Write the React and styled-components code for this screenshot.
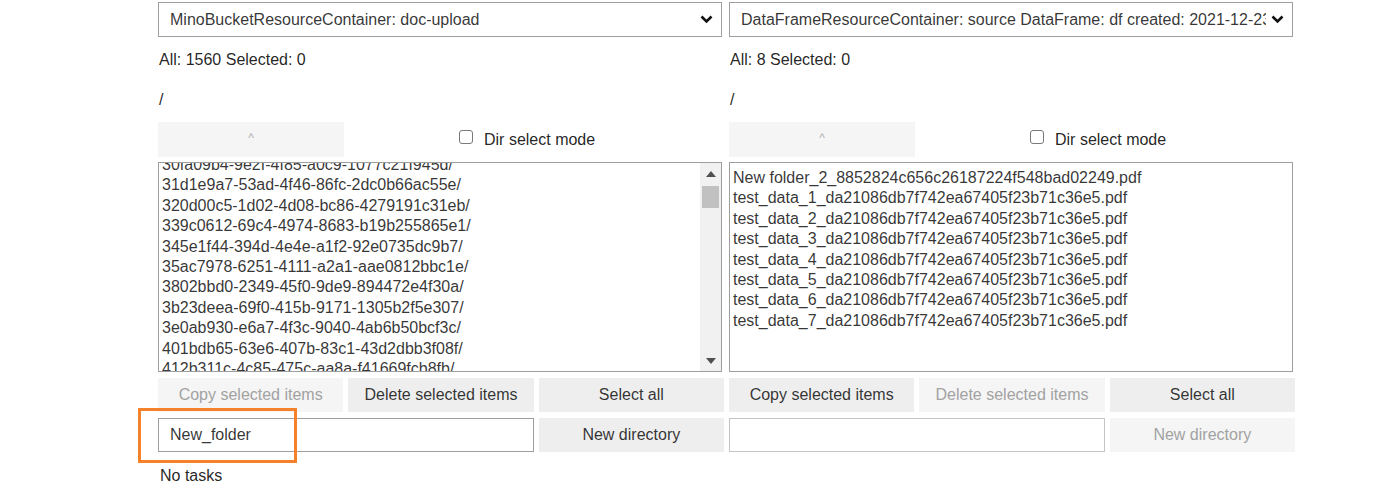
import React from "react";
import styled, { createGlobalStyle } from "styled-components";

const GlobalStyle = createGlobalStyle`
  html, body {
    margin: 0;
    padding: 0;
    background: #fff;
    font-family: "Liberation Sans", Arial, Helvetica, sans-serif;
    font-size: 16px;
    color: rgba(0, 0, 0, 0.87);
  }
`;

const Page = styled.div`
  padding-left: 158px;
  width: 1137px;
`;

const Columns = styled.div`
  display: grid;
  grid-template-columns: 566px 566px;
  column-gap: 5px;
`;

const Column = styled.div`
  display: flex;
  flex-direction: column;
`;

const Dropdown = styled.div`
  margin-top: 2px;
  width: 564px;
  height: 35px;
  box-sizing: border-box;
  border: 1px solid #9e9e9e;
  display: flex;
  align-items: center;
  padding: 0 8px 0 11px;
  gap: 5px;
  color: rgba(0, 0, 0, 0.8);
`;

const DropdownText = styled.span`
  flex: 1;
  overflow: hidden;
  white-space: nowrap;
`;

const Label = styled.div`
  height: 20px;
  line-height: 20px;
  margin-top: ${(p) => p.$top}px;
  padding-left: 1px;
`;

const ToolRow = styled.div`
  margin-top: 12px;
  height: 35px;
  display: flex;
  align-items: center;
`;

const Button = styled.button`
  height: ${(p) => p.$h || 34}px;
  width: 100%;
  border: none;
  margin: 0;
  padding: 0 6px;
  font-family: inherit;
  font-size: 16px;
  background: ${(p) => (p.disabled ? "#f5f5f5" : "#eeeeee")};
  color: ${(p) => (p.disabled ? "#a2a2a2" : "rgba(0,0,0,0.8)")};
  white-space: nowrap;
  overflow: hidden;
`;

const UpButton = styled(Button)`
  width: 186px;
  flex: none;
  font-size: 12px;
  color: #b0b0b0;
  padding-bottom: 4px;
`;

const CheckArea = styled.label`
  display: flex;
  align-items: center;
  margin-left: 115px;
  gap: 11px;
`;

const CheckBox = styled.span`
  width: 14px;
  height: 14px;
  box-sizing: border-box;
  border: 1.5px solid #7a7a7a;
  border-radius: 3px;
  background: #fff;
  margin-bottom: 5px;
`;

const ListBox = styled.div`
  margin-top: 5px;
  width: 564px;
  height: 210px;
  box-sizing: border-box;
  border: 1px solid #9e9e9e;
  display: flex;
  overflow: hidden;
`;

const ListRows = styled.div`
  flex: 1;
  overflow: hidden;
  padding: 5px 3px 0;
`;

const ListInner = styled.div`
  margin-top: ${(p) => p.$offset || 0}px;
`;

const ListItem = styled.div`
  height: 20.4px;
  line-height: 20.4px;
  white-space: nowrap;
  color: rgba(0, 0, 0, 0.8);
`;

const ScrollBar = styled.div`
  width: 21px;
  flex: none;
  background: #f1f1f1;
  display: flex;
  flex-direction: column;
  align-items: center;
`;

const ArrowCell = styled.div`
  height: 21px;
  width: 21px;
  display: flex;
  align-items: center;
  justify-content: center;
`;

const Track = styled.div`
  flex: 1;
  width: 100%;
  padding: 2px 2px 0;
  box-sizing: border-box;
`;

const Thumb = styled.div`
  height: 22px;
  background: #c1c1c1;
`;

const ButtonRow = styled.div`
  margin-top: 6px;
  display: grid;
  grid-template-columns: repeat(3, minmax(0, 1fr));
  column-gap: 5px;
`;

const InputCell = styled.div`
  position: relative;
  grid-column: span 2;
`;

const TextInput = styled.input`
  width: 100%;
  height: 34px;
  box-sizing: border-box;
  border: 1px solid ${(p) => (p.$light ? "#c4c4c4" : "#9e9e9e")};
  padding: 0 11px;
  font-family: inherit;
  font-size: 16px;
  color: rgba(0, 0, 0, 0.8);
  outline: none;
`;

const Highlight = styled.div`
  position: absolute;
  left: -20px;
  top: -10px;
  width: 159px;
  height: 55px;
  box-sizing: border-box;
  border: 3px solid #f5822a;
  pointer-events: none;
`;

const Status = styled.div`
  margin-top: 14px;
  height: 20px;
  line-height: 20px;
  padding-left: 2px;
`;

const Chevron = () => (
  <svg width="13" height="9" viewBox="0 0 13 9">
    <polyline points="1.5,1.5 6.5,6.5 11.5,1.5" fill="none" stroke="#111" strokeWidth="2.6" />
  </svg>
);

const Tri = ({ down }) => (
  <svg width="10" height="6" viewBox="0 0 10 6">
    <polygon points={down ? "0,0 10,0 5,6" : "0,6 10,6 5,0"} fill="#505050" />
  </svg>
);

const bucketItems = [
  "30fa09b4-9e2f-4f85-a0c9-1077c21f945d/",
  "31d1e9a7-53ad-4f46-86fc-2dc0b66ac55e/",
  "320d00c5-1d02-4d08-bc86-4279191c31eb/",
  "339c0612-69c4-4974-8683-b19b255865e1/",
  "345e1f44-394d-4e4e-a1f2-92e0735dc9b7/",
  "35ac7978-6251-4111-a2a1-aae0812bbc1e/",
  "3802bbd0-2349-45f0-9de9-894472e4f30a/",
  "3b23deea-69f0-415b-9171-1305b2f5e307/",
  "3e0ab930-e6a7-4f3c-9040-4ab6b50bcf3c/",
  "401bdb65-63e6-407b-83c1-43d2dbb3f08f/",
  "412b311c-4c85-475c-aa8a-f41669fcb8fb/",
];

const frameItems = [
  "New folder_2_8852824c656c26187224f548bad02249.pdf",
  ...[1, 2, 3, 4, 5, 6, 7].map((n) => `test_data_${n}_da21086db7f742ea67405f23b71c36e5.pdf`),
];

const Panel = ({ title, count, items, scroll, copyOff, deleteOff, dirOff, inputValue, highlight }) => (
  <Column>
    <Dropdown>
      <DropdownText>{title}</DropdownText>
      <Chevron />
    </Dropdown>
    <Label $top={13}>All: {count} Selected: 0</Label>
    <Label $top={20}>/</Label>
    <ToolRow>
      <UpButton disabled $h={35}>^</UpButton>
      <CheckArea>
        <CheckBox />
        <span>Dir select mode</span>
      </CheckArea>
    </ToolRow>
    <ListBox>
      <ListRows>
        <ListInner $offset={scroll ? -13 : 0}>
          {items.map((it) => (
            <ListItem key={it}>{it}</ListItem>
          ))}
        </ListInner>
      </ListRows>
      {scroll && (
        <ScrollBar>
          <ArrowCell>
            <Tri />
          </ArrowCell>
          <Track>
            <Thumb />
          </Track>
          <ArrowCell>
            <Tri down />
          </ArrowCell>
        </ScrollBar>
      )}
    </ListBox>
    <ButtonRow>
      <Button disabled={copyOff}>Copy selected items</Button>
      <Button disabled={deleteOff}>Delete selected items</Button>
      <Button>Select all</Button>
    </ButtonRow>
    <ButtonRow>
      <InputCell>
        <TextInput defaultValue={inputValue} $light={!inputValue} />
        {highlight && <Highlight />}
      </InputCell>
      <Button disabled={dirOff}>New directory</Button>
    </ButtonRow>
  </Column>
);

export default function App() {
  return (
    <>
      <GlobalStyle />
      <Page>
        <Columns>
          <Panel
            title="MinoBucketResourceContainer: doc-upload"
            count={1560}
            items={bucketItems}
            scroll
            copyOff
            inputValue="New_folder"
            highlight
          />
          <Panel
            title="DataFrameResourceContainer: source DataFrame: df created: 2021-12-23 10:15:42"
            count={8}
            items={frameItems}
            deleteOff
            dirOff
            inputValue=""
          />
        </Columns>
        <Status>No tasks</Status>
      </Page>
    </>
  );
}
